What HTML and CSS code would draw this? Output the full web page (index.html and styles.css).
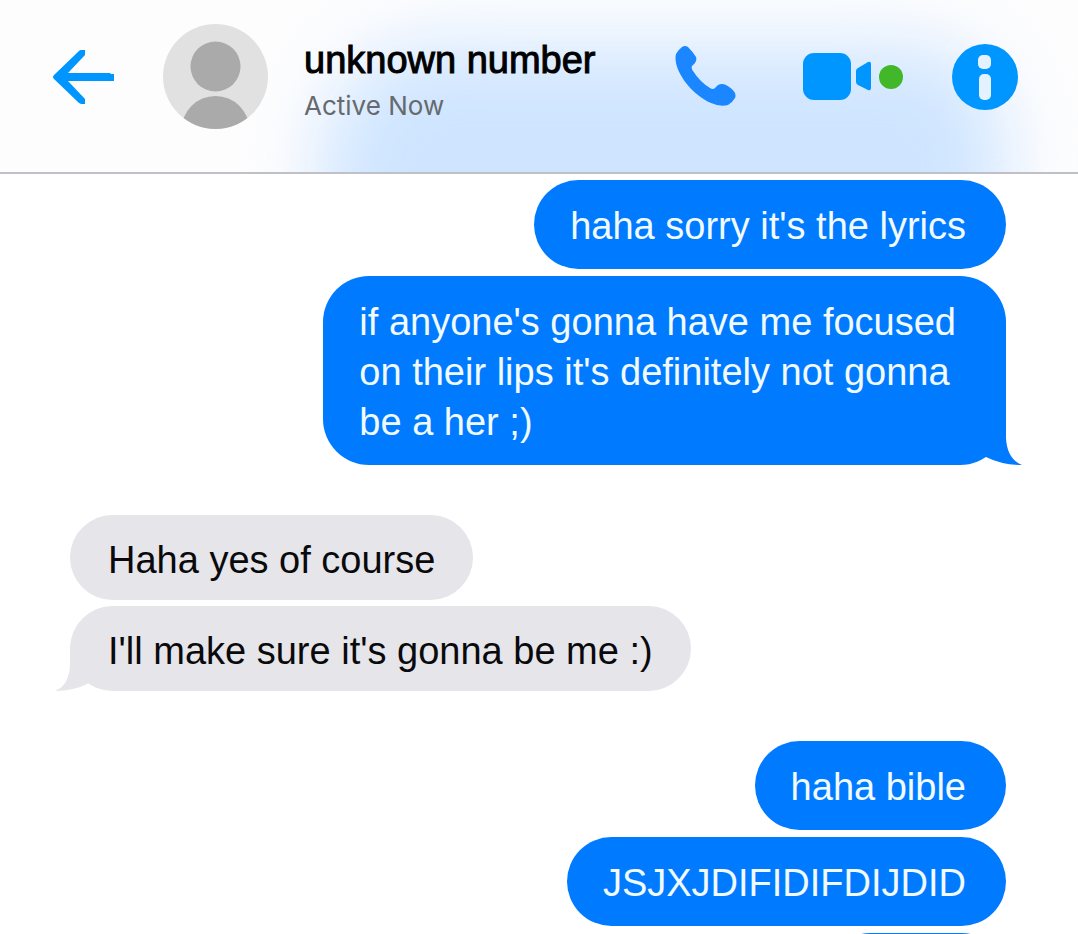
FILE: index.html
```html
<!DOCTYPE html>
<html lang="en">
<head>
<meta charset="utf-8">
<meta name="viewport" content="width=device-width, initial-scale=1">
<title>unknown number</title>
<link rel="stylesheet" href="styles.css">
</head>
<body>
<div class="chat">
  <header class="header">
    <button class="icon-button" type="button" aria-label="Back">
      <svg width="61" height="56" viewBox="0 0 61 56" fill="#0096ff">
        <path d="M26 2Q27 1 28 1H32V6L15 24H57L58 25H61V32H15L32 50V55H28L26 54L1 30Q-1 28 1 26Z"/>
      </svg>
    </button>
    <svg class="avatar" width="105" height="105" viewBox="0 0 105 105" role="img" aria-label="Profile picture">
      <clipPath id="avatar-clip"><circle cx="52.500" cy="52.500" r="52.500"/></clipPath>
      <g clip-path="url(#avatar-clip)">
        <rect width="105" height="105" fill="#e1e1e1"/>
        <circle cx="52.500" cy="42.500" r="25" fill="#aaa"/>
        <circle cx="52.500" cy="106" r="34" fill="#aaa"/>
      </g>
    </svg>
    <div class="contact">
      <h1 class="contact-name">unknown number</h1>
      <p class="contact-status">Active Now</p>
    </div>
    <div class="actions">
      <button class="icon-button" type="button" aria-label="Call">
        <svg width="61" height="61" viewBox="0 0 61 61" fill="#1a86ff">
          <path d="M7 1Q10 -1 13 1Q18 6 21 11Q22 14 20 17L17 20Q16 22 18 25Q25 36 35 42Q38 44 40 42L43 39Q47 37 51 39Q57 42 60 47Q61 50 60 52Q57 57 53 59Q45 61 36 57C18 49 4 31 1 17Q0 11 1 8Q3 4 7 1Z"/>
        </svg>
      </button>
      <button class="icon-button video" type="button" aria-label="Video call">
        <svg width="69" height="48" viewBox="0 0 69 48" fill="#0096ff">
          <rect x="1" width="48" height="47" rx="11"/>
          <path d="M54 18Q54 16 56 15L66 9Q69 8 69 11V35Q69 38 66 37L56 32Q54 31 54 29Z"/>
        </svg>
        <span class="online-dot"></span>
      </button>
      <button class="icon-button" type="button" aria-label="Information">
        <svg width="66" height="66" viewBox="0 0 66 66">
          <circle cx="33" cy="33" r="33" fill="#0096ff"/>
          <rect x="26" y="11" width="13" height="14" rx="5" fill="#e4f1ff"/>
          <rect x="27" y="30" width="12" height="26" rx="5" fill="#e4f1ff"/>
        </svg>
      </button>
    </div>
  </header>
  <main class="messages">
    <section class="group sent">
      <p class="bubble">haha sorry it's the lyrics</p>
      <p class="bubble bubble-long">if anyone's gonna have me focused<br>on their lips it's definitely not gonna<br>be a her ;)
        <svg class="tail" width="52" height="60" viewBox="0 0 52 60" aria-hidden="true"><path d="M16 0H36V33Q37 54 52 60Q32 60 16 52Z"/></svg>
      </p>
    </section>
    <section class="group received">
      <p class="bubble">Haha yes of course</p>
      <p class="bubble">I'll make sure it's gonna be me :)
        <svg class="tail" width="52" height="60" viewBox="0 0 52 60" aria-hidden="true"><path d="M36 15H15V32Q15 54 0 60Q19 60 34 52Z"/></svg>
      </p>
    </section>
    <section class="group sent">
      <p class="bubble">haha bible</p>
      <p class="bubble">JSJXJDIFIDIFDIJDID</p>
      <p class="bubble bubble-next"></p>
    </section>
  </main>
</div>
</body>
</html>
```
FILE: styles.css
```css
* {
  box-sizing: border-box;
}

body {
  margin: 0;
  background: #fff;
  color: #0a0a0c;
  font-family: "Liberation Sans", Arial, sans-serif;
}

h1,
p {
  margin: 0;
}

.chat {
  display: flex;
  flex-direction: column;
  height: 100vh;
  overflow: hidden;
}

.header {
  position: relative;
  z-index: 0;
  display: flex;
  flex: none;
  align-items: center;
  padding: 24px 60px 43px 53px;
  overflow: hidden;
  background: #fdfdfe;
  border-bottom: 2px solid #bfc1c6;
}

.header::before {
  content: "";
  position: absolute;
  z-index: -1;
  inset: 46px 76px -160px 322px;
  border-radius: 110px 90px 0 0;
  background: #cfe5ff;
  filter: blur(36px);
}

.icon-button {
  display: flex;
  flex: none;
  align-items: center;
  padding: 0;
  border: 0;
  background: none;
  cursor: pointer;
}

.avatar {
  flex: none;
  margin: 0 36px 0 49px;
}

.contact {
  flex: 1;
  align-self: flex-start;
  padding-top: 12px;
  white-space: nowrap;
}

.contact-name {
  font-size: 38px;
  font-weight: 400;
  line-height: 48px;
  color: #000;
  -webkit-text-stroke: 1px #000;
}

.contact-status {
  font-family: Inter, sans-serif;
  font-size: 26px;
  line-height: 44px;
  color: #66696e;
}

.actions {
  display: flex;
  align-items: center;
}

.video {
  gap: 8px;
  margin: 0 49px 0 66px;
}

.online-dot {
  width: 24px;
  height: 24px;
  border-radius: 50%;
  background: #42b72a;
}

.messages {
  display: flex;
  flex: 1;
  flex-direction: column;
  gap: 50px;
  min-height: 0;
  padding: 6px 72px 0 70px;
}

.group {
  display: flex;
  flex: none;
  flex-direction: column;
}

.sent {
  gap: 7px;
  align-items: flex-end;
}

.received {
  gap: 6px;
  align-items: flex-start;
}

.bubble {
  position: relative;
  border-radius: 46px;
  font-size: 38px;
  line-height: 50px;
}

.sent .bubble {
  padding: 21px 40px 18px 36px;
  background: #007aff;
  color: #f0faff;
}

.sent .bubble-long {
  padding-right: 50px;
}

.received .bubble {
  padding: 20px 38px 15px;
  background: #e5e5ea;
}

.bubble-next {
  width: 180px;
  height: 89px;
}

.tail {
  position: absolute;
  bottom: 0;
}

.sent .tail {
  right: -16px;
  fill: #007aff;
}

.received .tail {
  left: -15px;
  fill: #e5e5ea;
}
```
